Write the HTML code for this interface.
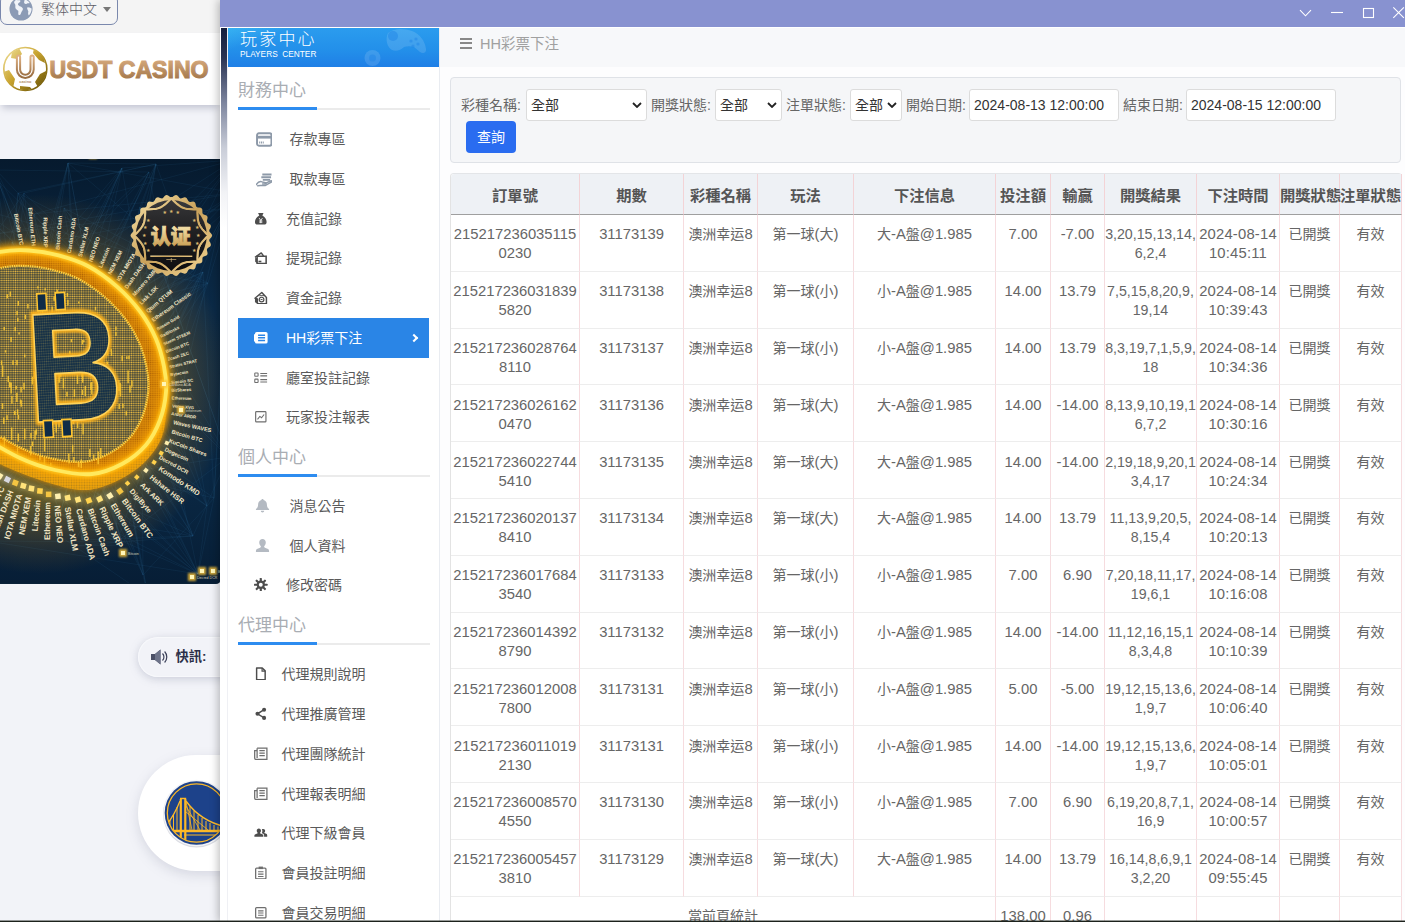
<!DOCTYPE html>
<html lang="zh-Hant">
<head>
<meta charset="utf-8">
<title>玩家中心 - HH彩票下注</title>
<style>
*{box-sizing:border-box;margin:0;padding:0}
html,body{width:1405px;height:922px;overflow:hidden}
body{position:relative;background:#f2f3f8;font-family:"Liberation Sans","Noto Sans CJK TC","Noto Sans CJK SC",sans-serif;color:#666}
.abs{position:absolute}
/* ---------- page behind ---------- */
#topstrip{left:0;top:0;width:220px;height:33px;background:#f4f4f4}
#lang{left:0;top:-6px;width:118px;height:31px;border:1px solid #7a88ad;border-radius:7px;background:#f5f5f5}
#lang span{position:absolute;left:40px;top:5px;font-size:14px;line-height:18px;color:#5c5c66;letter-spacing:0;font-weight:300}
#lang i{position:absolute;left:102px;top:12px;border:4px solid transparent;border-top:5px solid #777;border-bottom:0}
#logobar{left:0;top:33px;width:220px;height:72px;background:#fff;box-shadow:0 5px 7px -2px rgba(120,125,150,.4)}
#banner{left:0;top:159px;width:220px;height:424.500px;background:#0a2238;overflow:hidden;border-radius:0 0 4px 0}
#news{left:138px;top:637px;width:120px;height:40px;border-radius:20px;background:#f2f3f8;box-shadow:0 2px 8px rgba(130,135,160,.35),inset 0 0 0 1px #f7f8fb}
#news b{position:absolute;left:37.500px;top:11px;font-size:13.300px;line-height:18px;color:#2b2f48;font-weight:bold}
#team{left:138px;top:755px;width:200px;height:116px;border-radius:58px;background:#fff;box-shadow:0 4px 12px rgba(130,135,160,.25)}
/* ---------- modal ---------- */
#modal{left:220px;top:0;width:1185px;height:922px;background:#fff;box-shadow:-2px 0 8px rgba(0,0,0,.25)}
#tbar{left:0;top:0;width:1185px;height:27px;background:#8892d0}
#stripe{left:1px;top:28px;width:7px;height:894px;background:linear-gradient(#141e3c 0,#2a3454 30px,#7d859e 75px,#c9cdd8 120px,#f2f3f6 165px,#fff 200px)}
#side{left:8px;top:28px;width:212px;height:894px;background:#fff;border-right:1px solid #e9ecf1;box-shadow:-1px 0 0 #eff0f4}
#sidehead{left:0;top:0;width:211px;height:39px;background:linear-gradient(180deg,#2b9cee 0,#2390ea 55%,#1f7fe6 100%);overflow:hidden}
#main{left:220px;top:28px;width:965px;height:894px;background:#fdfdfe}

#mhead{left:0;top:0;width:965px;height:39px;background:#f7f8fa}
#mhead .ham{position:absolute;left:20px;top:9.5px;width:12px;height:12px}
#mhead .ham i{display:block;height:2px;background:#888;margin-bottom:2.6px}
#mhead .ttl{position:absolute;left:40px;top:6px;font-size:14.5px;line-height:20px;color:#a0a0a0}
#filter{left:10px;top:49px;width:951px;height:86px;border:1px solid #dfe2e7;border-radius:4px;background:#f5f6f8}
#filter label{top:17px;font-size:14px;line-height:20px;color:#666;white-space:nowrap}
.sel,.inp{top:11px;height:32px;background:#fff;border:1px solid #dcdcdc;border-radius:3px;font-size:14px;line-height:30px;color:#333;padding-left:4px;white-space:nowrap}
.sel svg{position:absolute;right:4px;top:12px;width:10px;height:6px;fill:none;stroke:#222;stroke-width:1.8}
.btn{left:15px;top:43px;width:50px;height:32px;border-radius:4px;background:#2a6cf0;color:#fff;font-size:14px;line-height:32px;text-align:center}
#tb{left:10px;top:145px;width:951px;border-collapse:separate;border-spacing:0;table-layout:fixed;font-size:14.8px;color:#666;border-left:1px solid #e3e3e3;border-top:1px solid #e3e5e8;border-radius:4px 4px 0 0}
#tb th{height:41px;background:#eef1f5;border-bottom:1px solid #9f9f9f;border-right:1px solid #f3d3d6;font-size:15.3px;font-weight:bold;color:#555;text-align:center;white-space:nowrap;padding:0}
#tb td{height:56.8px;vertical-align:top;padding:10.4px 0 0;line-height:19px;text-align:center;white-space:nowrap;border-right:1px solid #f6dcdf;border-bottom:1px solid #ededed;background:#fff}
#tb td.c{font-size:14px}
#tb td s{text-decoration:none;font-size:14.8px}
#tb td:nth-child(8){font-size:14.2px}
#tb td:nth-child(9){letter-spacing:.2px}
#tb th:first-child{border-radius:4px 0 0 0}

#sidehead .t1{position:absolute;left:12px;top:.5px;font-size:17px;line-height:22px;color:#fff;white-space:nowrap;letter-spacing:2.2px;font-weight:300}
#sidehead .t2{position:absolute;left:12px;top:20.5px;font-size:8.3px;line-height:10px;color:#fff;white-space:nowrap;letter-spacing:0}
.sec{position:absolute;left:10px;width:192px;height:34px;margin-top:2px;padding-top:.5px;font-size:17px;line-height:28px;color:#a9adb3;white-space:nowrap;border-bottom:2px solid #ebebeb}
.sec b{position:absolute;left:0;bottom:-2px;width:79px;height:3px;background:#2d8cf0}
.it{position:absolute;left:0;width:211px;height:40px;font-size:14px;line-height:40px;color:#5a5a5a;white-space:nowrap}
.it span{position:absolute;top:0}
.it .ic{position:absolute;left:26.200px;top:12.600px;width:13.600px;height:13.600px;color:#4d4d4d}
.it .ic.ln{color:#6e6e6e}
.it .ic.big{left:27.500px;top:12.800px;width:16.500px;height:15px;color:#8d99a8}
.it .ic.big2{left:26.500px;top:12px;width:15px;height:15px;color:#b4bac2}
.act{left:10px;top:290px;width:191px;height:40px;background:#2a85e6}
.it.on{color:#fff}
.it.on .ic{color:#fff}
.it.on em{position:absolute;left:124.500px;top:17px;width:6px;height:6px;border-top:2px solid #fff;border-right:2px solid #fff;transform:rotate(45deg)}
#bottomline{left:0;top:920px;width:1405px;height:2px;background:linear-gradient(rgba(30,36,30,.45) 0,rgba(30,36,30,.45) 50%,#1c221c 50%)}
</style>
</head>
<body>
<div id="topstrip" class="abs"></div>
<div id="lang" class="abs"><svg class="abs" style="left:8px;top:2px" width="24" height="24" viewBox="0 0 26 26"><circle cx="13" cy="13" r="12.500" fill="#8c9bb5"/><path d="M7 3.500c2-.5 3.500.5 5 0 1 1.500-.5 2.500-2 3.500-1 1.500.5 2 1.500 3 1.500.5 3 1 3.500 2.500.500 2-1.500 3-2 5-.5 1.500-1.500 2.500-2.500 2-1-1.500 0-3-.5-4.500-1-1-2.500-1.500-3-3-.5-2 .5-3.500-1-5C5 5.500 6 4.500 7 3.500zM17 2.500c2 .5 4 2 5.500 4-1 .5-2 0-3 .5-1 1-2.500.5-3-.5-.5-1.500.5-2.500.5-4zM20 11c1.500 0 3 .5 4.500 1.500 0 3-1 5.500-3 7.500-1-1-1-2.500-.5-4-.5-2-2-3-1-5z" fill="#f0f3f8"/></svg><span>繁体中文</span><i></i></div>
<div id="logobar" class="abs"><svg class="abs" style="left:0;top:0" width="220" height="72" viewBox="0 33 220 72" font-family="'Liberation Sans',sans-serif">
<defs><linearGradient id="lg1" x1="0" y1="0" x2="0" y2="1"><stop offset="0" stop-color="#ddb083"/><stop offset="1" stop-color="#9a6e42"/></linearGradient>
<linearGradient id="lg2" x1="0" y1="0" x2="1" y2="1"><stop offset="0" stop-color="#f2e3a0"/><stop offset=".45" stop-color="#c9a42f"/><stop offset="1" stop-color="#5e4a00"/></linearGradient>
<clipPath id="ballc"><circle cx="25.300" cy="69" r="21.200"/></clipPath></defs>
<circle cx="25.300" cy="69" r="21.500" fill="#fff" stroke="url(#lg2)" stroke-width="1.600"/>
<g clip-path="url(#ballc)" fill="url(#lg2)"><path d="M12 52l7-4 3 6-5 5-6-1zM34 48l9 6 2 9-6-3-6-7zM3 72l6-2 6 9-2 9-7-6zM40 74l6-3v10l-7 8-4-7zM20 86l10 1 4 5-14 1z"/></g>
<path d="M18.500 57v12.500a6.800 6.800 0 0 0 13.600 0V57" fill="none" stroke="url(#lg1)" stroke-width="5.200" stroke-linecap="round"/>
<path d="M18.500 57v12.500a6.800 6.800 0 0 0 13.600 0V57" fill="none" stroke="#fff" stroke-width="1.200" stroke-linecap="round"/>
<text x="25.300" y="83" font-size="3.800" text-anchor="middle" fill="#b08a60" font-weight="bold">casino</text>
<text x="49.500" y="78.300" font-size="24" font-weight="bold" fill="url(#lg1)" stroke="url(#lg1)" stroke-width="1.100" textLength="159" lengthAdjust="spacingAndGlyphs">USDT CASINO</text>
</svg></div>
<div id="banner" class="abs"><!--BANNER--><svg id="bsvg" width="220" height="424" viewBox="0 0 220 424" font-family="'Liberation Sans',sans-serif">
<defs>
<linearGradient id="bg" x1="0" y1="0" x2="0" y2="1"><stop offset="0" stop-color="#061a2e"/><stop offset=".35" stop-color="#0b2a47"/><stop offset=".75" stop-color="#0a2844"/><stop offset="1" stop-color="#071e36"/></linearGradient>
<radialGradient id="face" cx="25" cy="215" r="150" gradientUnits="userSpaceOnUse"><stop offset="0" stop-color="#9a6e14"/><stop offset=".55" stop-color="#a87812"/><stop offset=".78" stop-color="#c48a0c"/><stop offset=".93" stop-color="#e9a80c"/><stop offset="1" stop-color="#ffd234"/></radialGradient>
<radialGradient id="glow" cx="40" cy="225" r="190" gradientUnits="userSpaceOnUse"><stop offset=".6" stop-color="#ffb400" stop-opacity=".35"/><stop offset=".85" stop-color="#ff9a00" stop-opacity=".12"/><stop offset="1" stop-color="#ff9a00" stop-opacity="0"/></radialGradient>
<pattern id="dots" width="2.6" height="2.6" patternUnits="userSpaceOnUse"><rect width="2.6" height="2.6" fill="#0a2440" fill-opacity=".0"/><circle cx="1.3" cy="1.3" r=".95" fill="#ffd555"/></pattern>
<pattern id="bdots" width="2.2" height="2.2" patternUnits="userSpaceOnUse"><circle cx="1.1" cy="1.1" r=".7" fill="#8a4300" fill-opacity=".6"/></pattern>
<pattern id="ddots" width="2.6" height="2.6" patternUnits="userSpaceOnUse"><circle cx="1.3" cy="1.3" r=".9" fill="#0a2440" fill-opacity=".55"/></pattern>
<linearGradient id="gold" x1="0" y1="0" x2="1" y2="1"><stop offset="0" stop-color="#f7e2a8"/><stop offset=".5" stop-color="#c9a15a"/><stop offset="1" stop-color="#f3d796"/></linearGradient>
<linearGradient id="gold2" x1="0" y1="0" x2="0" y2="1"><stop offset="0" stop-color="#f8e6b0"/><stop offset="1" stop-color="#c79c50"/></linearGradient>
<linearGradient id="blk" x1="0" y1="0" x2="0" y2="1"><stop offset="0" stop-color="#3a3a3c"/><stop offset=".5" stop-color="#1e1e20"/><stop offset="1" stop-color="#0c0c0e"/></linearGradient>
<filter id="bl1" x="-20%" y="-20%" width="140%" height="140%"><feGaussianBlur stdDeviation="1.2"/></filter>
<filter id="bl3" x="-20%" y="-20%" width="140%" height="140%"><feGaussianBlur stdDeviation="3"/></filter>
<clipPath id="cface"><path id="facep" d="M-30.0 103.0C-25.0 101.3 -9.8 94.9 0.0 93.0C9.8 91.1 19.2 90.9 29.0 91.5C38.8 92.1 48.8 93.8 58.6 96.4C68.4 99.0 78.1 101.8 87.8 107.0C97.5 112.2 108.2 119.9 117.0 127.6C125.8 135.3 134.0 144.3 140.5 153.0C147.0 161.7 152.1 170.9 156.0 180.0C159.9 189.1 162.3 198.8 164.0 207.6C165.7 216.4 166.7 224.1 166.0 233.0C165.3 241.9 163.3 252.2 160.0 261.0C156.7 269.8 152.3 278.7 146.0 286.0C139.7 293.3 131.0 300.2 122.0 305.0C113.0 309.8 103.2 314.0 92.0 315.0C80.8 316.0 67.0 313.7 55.0 311.0C43.0 308.3 34.2 305.7 20.0 299.0C5.8 292.3 -21.7 275.7 -30.0 271.0Z"/></clipPath>
</defs>
<rect width="220" height="424" fill="url(#bg)"/>
<path d="M64 49L193 377M64 49L82 164M64 49L146 151M64 49L27 248M149 13L-4 11M149 13L207 347M149 13L7 272M149 13L-14 192M119 148L234 1M119 148L157 177M119 148L60 355M119 148L82 381M-5 213L198 415M-5 213L7 272M-5 213L98 118M-5 213L6 147M-10 179L119 148M-10 179L89 328M-10 179L-13 382M-10 179L193 377M-2 22L157 177M-2 22L46 140M-2 22L-5 213M-2 22L-13 382M90 360L80 288M90 360L203 113M90 360L198 415M90 360L6 147M12 83L193 377M12 83L187 302M12 83L123 386M12 83L-10 287M143 416L140 48M143 416L46 140M143 416L68 4M143 416L14 94M130 162L-10 287M130 162L170 112M130 162L208 124M130 162L41 203M234 1L179 244M234 1L235 34M234 1L6 147M234 1L34 55M203 113L123 386M203 113L-5 213M203 113L-4 303M203 113L82 164M18 34L198 415M18 34L170 112M18 34L1 187M18 34L156 5M60 355L1 187M60 355L193 377M60 355L234 1M60 355L-10 287M27 248L60 355M27 248L179 244M27 248L82 164M27 248L235 34M146 151L82 381M146 151L89 328M146 151L7 272M146 151L64 49M122 9L7 272M122 9L1 187M122 9L234 1M122 9L146 151M-5 75L229 49M-5 75L235 34M-5 75L7 272M-5 75L43 244M157 177L228 298M157 177L14 94M157 177L203 113M157 177L26 87M62 249L207 347M62 249L41 203M62 249L234 1M62 249L98 118M98 118L187 302M98 118L122 9M98 118L-5 213M98 118L62 249M187 302L207 347M187 302L157 177M187 302L82 164M187 302L1 187M43 244L62 249M43 244L122 9M43 244L119 148M43 244L149 13M117 383L60 355M117 383L-13 382M117 383L-5 75M117 383L228 298M170 112L170 112M170 112L20 205M170 112L-5 213M170 112L131 190M235 34L20 205M235 34L194 111M235 34L68 4M235 34L208 124M89 328L-5 333M89 328L198 415M89 328L46 140M89 328L-19 173M20 205L122 9M20 205L12 83M20 205L123 386M20 205L214 339M-10 287L6 147M-10 287L-19 173M-10 287L68 4M-10 287L122 9M179 244L140 48M179 244L62 249M179 244L-13 382M179 244L-20 50M208 124L119 148M208 124L114 264M208 124L117 383M208 124L64 49M161 253L62 249M161 253L43 244M161 253L157 177M161 253L82 164M131 190L146 151M131 190L12 83M131 190L-5 333M131 190L6 147M198 415L-13 382M198 415L7 272M198 415L60 355M198 415L12 83M103 286L161 253M103 286L170 112M103 286L-4 303M103 286L-2 22M-4 303L18 34M-4 303L68 4M-4 303L156 5M-4 303L-5 213M148 437L143 416M148 437L114 264M148 437L-5 333M148 437L68 4M194 111L-20 50M194 111L235 34M194 111L-4 303M194 111L156 5M80 288L-20 50M80 288L140 48M80 288L7 272M80 288L68 4M-14 192L161 253M-14 192L6 147M-14 192L198 415M-14 192L235 34M24 34L156 5M24 34L-5 75M24 34L-19 173M24 34L146 151M-5 333L26 87M-5 333L114 264M-5 333L24 34M-5 333L130 162M14 94L208 124M14 94L76 241M14 94L130 162M14 94L20 205M82 381L80 288M82 381L146 151M82 381L62 249M82 381L193 377M1 187L157 177M1 187L131 190M1 187L-5 75M1 187L207 347M123 386L-10 287M123 386L18 34M123 386L26 87M123 386L-4 11M193 377L98 118M193 377L-10 287M193 377L228 298M193 377L-20 50M52 171L41 203M52 171L82 381M52 171L-19 173M52 171L235 34M73 387L123 386M73 387L24 34M73 387L203 113M73 387L193 377M229 49L119 148M229 49L82 381M229 49L214 339M229 49L114 264M26 87L119 148M26 87L229 49M26 87L14 94M26 87L6 147M41 203L194 111M41 203L-20 50M41 203L143 416M41 203L27 248M133 101L179 244M133 101L60 355M133 101L234 1M133 101L198 415M-19 173L103 286M-19 173L-2 22M-19 173L117 383M-19 173L122 9M76 241L76 241M76 241L198 415M76 241L41 203M76 241L62 249M228 298L140 48M228 298L-20 50M228 298L34 55M228 298L-5 333M114 264L203 113M114 264L-4 303M114 264L12 83M114 264L117 383M156 5L76 241M156 5L130 162M156 5L103 286M156 5L119 148M214 339L203 113M214 339L198 415M214 339L234 1M214 339L-10 287M207 347L143 416M207 347L198 415M207 347L146 151M207 347L214 339M82 164L149 13M82 164L82 381M82 164L-19 173M82 164L103 286M7 272L122 9M7 272L-2 22M7 272L-13 382M7 272L208 124M-4 11L27 248M-4 11L98 118M-4 11L198 415M-4 11L90 360M34 55L117 383M34 55L235 34M34 55L-14 192M34 55L-13 382M68 4L89 328M68 4L194 111M68 4L156 5M68 4L68 4M-20 50L43 244M-20 50L103 286M-20 50L1 187M-20 50L119 148M6 147L131 190M6 147L-10 179M6 147L149 13M6 147L119 148M-13 382L68 4M-13 382L170 112M-13 382L-20 50M-13 382L82 164M140 48L161 253M140 48L156 5M140 48L60 355M140 48L228 298M46 140L34 55M46 140L46 140M46 140L26 87M46 140L68 4" stroke="#3f86b5" stroke-opacity=".2" stroke-width=".5" fill="none"/>
<rect width="220" height="424" fill="url(#glow)"/>
<g fill="#f3e6c4" font-weight="bold"><text x="21.6" y="86.2" font-size="5.6" text-anchor="end" transform="rotate(80.0 21.6 86.2)" dy="2.0">Bitcoin BTC</text><text x="33.9" y="86.9" font-size="5.6" text-anchor="end" transform="rotate(84.6 33.9 86.9)" dy="2.0">Ethereum ETH</text><text x="45.9" y="88.6" font-size="5.6" text-anchor="end" transform="rotate(89.2 45.9 88.6)" dy="2.0">Ripple XRP</text><text x="57.6" y="90.9" font-size="5.6" transform="rotate(-86.2 57.6 90.9)" dy="2.0">Bitcoin Cash</text><text x="68.9" y="94.2" font-size="5.6" transform="rotate(-81.6 68.9 94.2)" dy="2.0">Cardano ADA</text><text x="79.9" y="97.8" font-size="5.6" transform="rotate(-77.0 79.9 97.8)" dy="2.0">Stellar XLM</text><text x="90.3" y="102.6" font-size="5.6" transform="rotate(-72.4 90.3 102.6)" dy="2.0">NEO NEO</text><text x="100.0" y="108.5" font-size="5.6" transform="rotate(-67.8 100.0 108.5)" dy="2.0">Litecoin</text><text x="109.1" y="115.1" font-size="5.6" transform="rotate(-63.2 109.1 115.1)" dy="2.0">NEM XEM</text><text x="117.8" y="121.7" font-size="5.6" transform="rotate(-58.6 117.8 121.7)" dy="2.0">IOTA MIOTA</text><text x="125.7" y="129.0" font-size="5.6" transform="rotate(-54.0 125.7 129.0)" dy="2.0">Dash DASH</text><text x="133.3" y="136.5" font-size="5.6" transform="rotate(-49.4 133.3 136.5)" dy="2.0">Monero XMR</text><text x="140.1" y="144.5" font-size="5.6" transform="rotate(-44.8 140.1 144.5)" dy="2.0">Lisk LSK</text><text x="146.6" y="152.7" font-size="5.6" transform="rotate(-40.2 146.6 152.7)" dy="2.0">Qtum QTUM</text><text x="152.1" y="161.4" font-size="5.6" transform="rotate(-35.6 152.1 161.4)" dy="2.0">Ethereum Classic</text><text x="157.1" y="170.5" font-size="4.3" transform="rotate(-31.0 157.1 170.5)" dy="1.5">Bitcoin Gold</text><text x="160.4" y="177.7" font-size="4.3" transform="rotate(-27.4 160.4 177.7)" dy="1.5">RaiBlocks</text><text x="163.4" y="185.1" font-size="4.3" transform="rotate(-23.8 163.4 185.1)" dy="1.5">Steem STEEM</text><text x="165.8" y="192.7" font-size="4.3" transform="rotate(-20.2 165.8 192.7)" dy="1.5">Bitcoin BTC</text><text x="167.5" y="200.4" font-size="4.3" transform="rotate(-16.6 167.5 200.4)" dy="1.5">Zcash ZEC</text><text x="169.1" y="208.0" font-size="4.3" transform="rotate(-13.0 169.1 208.0)" dy="1.5">Stratis STRAT</text><text x="170.1" y="215.8" font-size="4.3" transform="rotate(-9.4 170.1 215.8)" dy="1.5">Bytecoin</text><text x="170.8" y="223.5" font-size="4.3" transform="rotate(-5.8 170.8 223.5)" dy="1.5">Siacoin SC</text><text x="171.2" y="231.3" font-size="4.3" transform="rotate(-2.2 171.2 231.3)" dy="1.5">BitShares</text><text x="171.6" y="239.0" font-size="4.3" transform="rotate(1.4 171.6 239.0)" dy="1.5">Ethereum</text><text x="172.2" y="246.9" font-size="4.3" transform="rotate(5.0 172.2 246.9)" dy="1.5">Verge XVG</text><text x="171.3" y="254.6" font-size="4.3" transform="rotate(8.6 171.3 254.6)" dy="1.5">Ardor ARDR</text><text x="173.4" y="263.1" font-size="5.6" transform="rotate(12.2 173.4 263.1)" dy="2.0">Waves WAVES</text><text x="171.7" y="272.4" font-size="5.6" transform="rotate(16.4 171.7 272.4)" dy="2.0">Bitcoin BTC</text><text x="169.1" y="281.5" font-size="5.6" transform="rotate(20.6 169.1 281.5)" dy="2.0">KuCoin Shares</text><text x="165.0" y="290.0" font-size="5.6" transform="rotate(24.8 165.0 290.0)" dy="2.0">Dogecoin</text><text x="159.5" y="297.8" font-size="5.6" transform="rotate(29.0 159.5 297.8)" dy="2.0">Decred DCR</text><text x="159.4" y="308.9" font-size="7.2" transform="rotate(33.2 159.4 308.9)" dy="2.5">Komodo KMD</text><text x="150.7" y="317.4" font-size="7.2" transform="rotate(38.4 150.7 317.4)" dy="2.5">Hshare HSR</text><text x="141.4" y="325.0" font-size="7.2" transform="rotate(43.6 141.4 325.0)" dy="2.5">Ark ARK</text><text x="131.1" y="330.9" font-size="7.2" transform="rotate(48.8 131.1 330.9)" dy="2.5">DigiByte</text><text x="123.9" y="340.4" font-size="8.2" transform="rotate(54.0 123.9 340.4)" dy="2.9">Bitcoin BTC</text><text x="112.9" y="344.9" font-size="8.2" transform="rotate(59.2 112.9 344.9)" dy="2.9">Ethereum</text><text x="101.8" y="348.3" font-size="8.2" transform="rotate(64.4 101.8 348.3)" dy="2.9">Ripple XRP</text><text x="90.3" y="349.7" font-size="8.2" transform="rotate(69.6 90.3 349.7)" dy="2.9">Bitcoin Cash</text><text x="78.9" y="349.7" font-size="8.2" transform="rotate(74.8 78.9 349.7)" dy="2.9">Cardano ADA</text><text x="67.7" y="347.9" font-size="8.2" transform="rotate(80.0 67.7 347.9)" dy="2.9">Stellar XLM</text><text x="57.3" y="346.5" font-size="8.2" transform="rotate(85.2 57.3 346.5)" dy="2.9">NEO NEO</text><text x="47.3" y="343.2" font-size="8.2" text-anchor="end" transform="rotate(270.4 47.3 343.2)" dy="2.9">Ethereum</text><text x="37.7" y="340.9" font-size="8.2" text-anchor="end" transform="rotate(275.6 37.7 340.9)" dy="2.9">Litecoin</text><text x="28.5" y="338.2" font-size="8.2" text-anchor="end" transform="rotate(280.8 28.5 338.2)" dy="2.9">NEM XEM</text><text x="19.6" y="335.1" font-size="8.2" text-anchor="end" transform="rotate(286.0 19.6 335.1)" dy="2.9">IOTA MIOTA</text><text x="10.9" y="331.7" font-size="8.2" text-anchor="end" transform="rotate(291.2 10.9 331.7)" dy="2.9">Dash DASH</text><text x="2.3" y="328.0" font-size="8.2" text-anchor="end" transform="rotate(296.4 2.3 328.0)" dy="2.9">Bitcoin BTC</text><text x="-6.3" y="324.2" font-size="8.2" text-anchor="end" transform="rotate(301.6 -6.3 324.2)" dy="2.9">Monero XMR</text><text x="-14.6" y="319.7" font-size="8.2" text-anchor="end" transform="rotate(306.8 -14.6 319.7)" dy="2.9">Lisk LSK</text><text x="-22.7" y="314.5" font-size="8.2" text-anchor="end" transform="rotate(312.0 -22.7 314.5)" dy="2.9">Qtum QTUM</text><text x="-31.1" y="309.3" font-size="8.2" text-anchor="end" transform="rotate(317.2 -31.1 309.3)" dy="2.9">Ethereum Classic</text><text x="-38.8" y="302.8" font-size="8.2" text-anchor="end" transform="rotate(322.4 -38.8 302.8)" dy="2.9">Bitcoin Gold</text><text x="-46.5" y="296.0" font-size="8.2" text-anchor="end" transform="rotate(327.6 -46.5 296.0)" dy="2.9">RaiBlocks</text><text x="-51.6" y="287.2" font-size="8.2" text-anchor="end" transform="rotate(332.8 -51.6 287.2)" dy="2.9">Steem STEEM</text><text x="-55.8" y="277.9" font-size="8.2" text-anchor="end" transform="rotate(338.0 -55.8 277.9)" dy="2.9">Zcash ZEC</text><text x="-59.2" y="268.4" font-size="8.2" text-anchor="end" transform="rotate(343.2 -59.2 268.4)" dy="2.9">Stratis STRAT</text><text x="-61.7" y="258.5" font-size="8.2" text-anchor="end" transform="rotate(348.4 -61.7 258.5)" dy="2.9">Siacoin SC</text><text x="-63.3" y="248.5" font-size="8.2" text-anchor="end" transform="rotate(353.6 -63.3 248.5)" dy="2.9">BitShares</text></g>
<g filter="url(#bl3)" opacity=".7"><rect x="164.9" y="282.0" width="4" height="4" fill="#fff0b0" transform="rotate(-68 166.9 284.0)"/><rect x="159.2" y="292.2" width="4" height="4" fill="#ffd24d" transform="rotate(-63 161.2 294.2)"/><rect x="152.1" y="301.3" width="4" height="4" fill="#ffd24d" transform="rotate(-58 154.1 303.3)"/><rect x="143.9" y="309.4" width="4" height="4" fill="#fff0b0" transform="rotate(-52 145.9 311.4)"/><rect x="134.8" y="316.2" width="4" height="4" fill="#ffd24d" transform="rotate(-47 136.8 318.2)"/><rect x="125.5" y="322.3" width="4" height="4" fill="#ffd24d" transform="rotate(-42 127.5 324.3)"/><rect x="117.2" y="329.4" width="5.5" height="5.5" fill="#f5c542" transform="rotate(-37 119.9 332.2)"/><rect x="107.2" y="334.0" width="5.5" height="5.5" fill="#fff0b0" transform="rotate(-32 110.0 336.8)"/><rect x="96.9" y="337.3" width="5.5" height="5.5" fill="#ffe27a" transform="rotate(-26 99.6 340.0)"/><rect x="86.2" y="338.8" width="5.5" height="5.5" fill="#ffd24d" transform="rotate(-21 88.9 341.6)"/><rect x="75.2" y="337.9" width="5.5" height="5.5" fill="#ffe27a" transform="rotate(-16 78.0 340.6)"/><rect x="64.9" y="336.1" width="5.5" height="5.5" fill="#ffe27a" transform="rotate(-11 67.6 338.8)"/><rect x="55.2" y="334.6" width="5.5" height="5.5" fill="#fff0b0" transform="rotate(-6 57.9 337.4)"/><rect x="45.9" y="332.6" width="5.5" height="5.5" fill="#f5c542" transform="rotate(-0 48.7 335.3)"/><rect x="37.2" y="329.3" width="5.5" height="5.5" fill="#ffd24d" transform="rotate(5 39.9 332.0)"/><rect x="28.7" y="326.8" width="5.5" height="5.5" fill="#ffe27a" transform="rotate(10 31.5 329.6)"/><rect x="20.6" y="324.1" width="5.5" height="5.5" fill="#ffe27a" transform="rotate(15 23.3 326.8)"/><rect x="12.6" y="321.1" width="5.5" height="5.5" fill="#f5c542" transform="rotate(20 15.3 323.8)"/><rect x="4.7" y="317.8" width="5.5" height="5.5" fill="#d8d8e0" transform="rotate(26 7.5 320.5)"/><rect x="-3.0" y="314.2" width="5.5" height="5.5" fill="#fff0b0" transform="rotate(31 -0.3 316.9)"/><rect x="-10.9" y="310.5" width="5.5" height="5.5" fill="#d8d8e0" transform="rotate(36 -8.2 313.3)"/><rect x="-18.4" y="306.0" width="5.5" height="5.5" fill="#ffd24d" transform="rotate(41 -15.7 308.7)"/><rect x="-25.7" y="300.9" width="5.5" height="5.5" fill="#fff0b0" transform="rotate(46 -23.0 303.6)"/><rect x="-33.5" y="295.7" width="5.5" height="5.5" fill="#ffe27a" transform="rotate(52 -30.8 298.4)"/><rect x="-40.9" y="289.6" width="5.5" height="5.5" fill="#f5c542" transform="rotate(57 -38.2 292.4)"/><rect x="-45.7" y="281.6" width="5.5" height="5.5" fill="#ffd24d" transform="rotate(62 -42.9 284.3)"/><rect x="-49.7" y="273.2" width="5.5" height="5.5" fill="#ffd24d" transform="rotate(67 -46.9 275.9)"/><rect x="-52.9" y="264.4" width="5.5" height="5.5" fill="#fff0b0" transform="rotate(72 -50.1 267.1)"/><rect x="-55.3" y="255.4" width="5.5" height="5.5" fill="#f5c542" transform="rotate(78 -52.6 258.1)"/><rect x="-56.9" y="246.2" width="5.5" height="5.5" fill="#ffe27a" transform="rotate(83 -54.2 248.9)"/></g><g><rect x="164.9" y="282.0" width="4" height="4" fill="#fff0b0" transform="rotate(-68 166.9 284.0)"/><rect x="159.2" y="292.2" width="4" height="4" fill="#ffd24d" transform="rotate(-63 161.2 294.2)"/><rect x="152.1" y="301.3" width="4" height="4" fill="#ffd24d" transform="rotate(-58 154.1 303.3)"/><rect x="143.9" y="309.4" width="4" height="4" fill="#fff0b0" transform="rotate(-52 145.9 311.4)"/><rect x="134.8" y="316.2" width="4" height="4" fill="#ffd24d" transform="rotate(-47 136.8 318.2)"/><rect x="125.5" y="322.3" width="4" height="4" fill="#ffd24d" transform="rotate(-42 127.5 324.3)"/><rect x="117.2" y="329.4" width="5.5" height="5.5" fill="#f5c542" transform="rotate(-37 119.9 332.2)"/><rect x="107.2" y="334.0" width="5.5" height="5.5" fill="#fff0b0" transform="rotate(-32 110.0 336.8)"/><rect x="96.9" y="337.3" width="5.5" height="5.5" fill="#ffe27a" transform="rotate(-26 99.6 340.0)"/><rect x="86.2" y="338.8" width="5.5" height="5.5" fill="#ffd24d" transform="rotate(-21 88.9 341.6)"/><rect x="75.2" y="337.9" width="5.5" height="5.5" fill="#ffe27a" transform="rotate(-16 78.0 340.6)"/><rect x="64.9" y="336.1" width="5.5" height="5.5" fill="#ffe27a" transform="rotate(-11 67.6 338.8)"/><rect x="55.2" y="334.6" width="5.5" height="5.5" fill="#fff0b0" transform="rotate(-6 57.9 337.4)"/><rect x="45.9" y="332.6" width="5.5" height="5.5" fill="#f5c542" transform="rotate(-0 48.7 335.3)"/><rect x="37.2" y="329.3" width="5.5" height="5.5" fill="#ffd24d" transform="rotate(5 39.9 332.0)"/><rect x="28.7" y="326.8" width="5.5" height="5.5" fill="#ffe27a" transform="rotate(10 31.5 329.6)"/><rect x="20.6" y="324.1" width="5.5" height="5.5" fill="#ffe27a" transform="rotate(15 23.3 326.8)"/><rect x="12.6" y="321.1" width="5.5" height="5.5" fill="#f5c542" transform="rotate(20 15.3 323.8)"/><rect x="4.7" y="317.8" width="5.5" height="5.5" fill="#d8d8e0" transform="rotate(26 7.5 320.5)"/><rect x="-3.0" y="314.2" width="5.5" height="5.5" fill="#fff0b0" transform="rotate(31 -0.3 316.9)"/><rect x="-10.9" y="310.5" width="5.5" height="5.5" fill="#d8d8e0" transform="rotate(36 -8.2 313.3)"/><rect x="-18.4" y="306.0" width="5.5" height="5.5" fill="#ffd24d" transform="rotate(41 -15.7 308.7)"/><rect x="-25.7" y="300.9" width="5.5" height="5.5" fill="#fff0b0" transform="rotate(46 -23.0 303.6)"/><rect x="-33.5" y="295.7" width="5.5" height="5.5" fill="#ffe27a" transform="rotate(52 -30.8 298.4)"/><rect x="-40.9" y="289.6" width="5.5" height="5.5" fill="#f5c542" transform="rotate(57 -38.2 292.4)"/><rect x="-45.7" y="281.6" width="5.5" height="5.5" fill="#ffd24d" transform="rotate(62 -42.9 284.3)"/><rect x="-49.7" y="273.2" width="5.5" height="5.5" fill="#ffd24d" transform="rotate(67 -46.9 275.9)"/><rect x="-52.9" y="264.4" width="5.5" height="5.5" fill="#fff0b0" transform="rotate(72 -50.1 267.1)"/><rect x="-55.3" y="255.4" width="5.5" height="5.5" fill="#f5c542" transform="rotate(78 -52.6 258.1)"/><rect x="-56.9" y="246.2" width="5.5" height="5.5" fill="#ffe27a" transform="rotate(83 -54.2 248.9)"/></g>
<path d="M-30.0 103.0C-25.0 101.3 -9.8 94.9 0.0 93.0C9.8 91.1 19.2 90.9 29.0 91.5C38.8 92.1 48.8 93.8 58.6 96.4C68.4 99.0 78.1 101.8 87.8 107.0C97.5 112.2 108.2 119.9 117.0 127.6C125.8 135.3 134.0 144.3 140.5 153.0C147.0 161.7 152.1 170.9 156.0 180.0C159.9 189.1 162.2 198.1 164.0 207.6C165.8 217.1 166.1 229.8 166.5 237.0C166.9 244.2 167.7 243.7 166.7 251.0C165.7 258.3 165.0 271.7 160.6 281.0C156.2 290.3 148.9 299.7 140.5 307.0C132.1 314.3 120.1 321.0 110.0 325.0C99.9 329.0 91.7 331.7 80.0 331.0C68.3 330.3 53.3 325.3 40.0 321.0C26.7 316.7 11.7 310.8 0.0 305.0C-11.7 299.2 -25.0 289.2 -30.0 286.0Z" fill="#ff9d00" filter="url(#bl3)" opacity=".75"/>
<path d="M-30.0 103.0C-25.0 101.3 -9.8 94.9 0.0 93.0C9.8 91.1 19.2 90.9 29.0 91.5C38.8 92.1 48.8 93.8 58.6 96.4C68.4 99.0 78.1 101.8 87.8 107.0C97.5 112.2 108.2 119.9 117.0 127.6C125.8 135.3 134.0 144.3 140.5 153.0C147.0 161.7 152.1 170.9 156.0 180.0C159.9 189.1 162.2 198.1 164.0 207.6C165.8 217.1 166.1 229.8 166.5 237.0C166.9 244.2 167.7 243.7 166.7 251.0C165.7 258.3 165.0 271.7 160.6 281.0C156.2 290.3 148.9 299.7 140.5 307.0C132.1 314.3 120.1 321.0 110.0 325.0C99.9 329.0 91.7 331.7 80.0 331.0C68.3 330.3 53.3 325.3 40.0 321.0C26.7 316.7 11.7 310.8 0.0 305.0C-11.7 299.2 -25.0 289.2 -30.0 286.0Z" fill="#f2a50a"/>
<path d="M-30.0 103.0C-25.0 101.3 -9.8 94.9 0.0 93.0C9.8 91.1 19.2 90.9 29.0 91.5C38.8 92.1 48.8 93.8 58.6 96.4C68.4 99.0 78.1 101.8 87.8 107.0C97.5 112.2 108.2 119.9 117.0 127.6C125.8 135.3 134.0 144.3 140.5 153.0C147.0 161.7 152.1 170.9 156.0 180.0C159.9 189.1 162.2 198.1 164.0 207.6C165.8 217.1 166.1 229.8 166.5 237.0C166.9 244.2 167.7 243.7 166.7 251.0C165.7 258.3 165.0 271.7 160.6 281.0C156.2 290.3 148.9 299.7 140.5 307.0C132.1 314.3 120.1 321.0 110.0 325.0C99.9 329.0 91.7 331.7 80.0 331.0C68.3 330.3 53.3 325.3 40.0 321.0C26.7 316.7 11.7 310.8 0.0 305.0C-11.7 299.2 -25.0 289.2 -30.0 286.0Z" fill="url(#ddots)" opacity=".5"/>
<path d="M-30.0 103.0C-25.0 101.3 -9.8 94.9 0.0 93.0C9.8 91.1 19.2 90.9 29.0 91.5C38.8 92.1 48.8 93.8 58.6 96.4C68.4 99.0 78.1 101.8 87.8 107.0C97.5 112.2 108.2 119.9 117.0 127.6C125.8 135.3 134.0 144.3 140.5 153.0C147.0 161.7 152.1 170.9 156.0 180.0C159.9 189.1 162.3 198.8 164.0 207.6C165.7 216.4 166.7 224.1 166.0 233.0C165.3 241.9 163.3 252.2 160.0 261.0C156.7 269.8 152.3 278.7 146.0 286.0C139.7 293.3 131.0 300.2 122.0 305.0C113.0 309.8 103.2 314.0 92.0 315.0C80.8 316.0 67.0 313.7 55.0 311.0C43.0 308.3 34.2 305.7 20.0 299.0C5.8 292.3 -21.7 275.7 -30.0 271.0Z" fill="#dc8c0a"/>
<path d="M-30.0 103.0C-25.0 101.3 -9.8 94.9 0.0 93.0C9.8 91.1 19.2 90.9 29.0 91.5C38.8 92.1 48.8 93.8 58.6 96.4C68.4 99.0 78.1 101.8 87.8 107.0C97.5 112.2 108.2 119.9 117.0 127.6C125.8 135.3 134.0 144.3 140.5 153.0C147.0 161.7 152.1 170.9 156.0 180.0C159.9 189.1 162.3 198.8 164.0 207.6C165.7 216.4 166.7 224.1 166.0 233.0C165.3 241.9 163.3 252.2 160.0 261.0C156.7 269.8 152.3 278.7 146.0 286.0C139.7 293.3 131.0 300.2 122.0 305.0C113.0 309.8 103.2 314.0 92.0 315.0C80.8 316.0 67.0 313.7 55.0 311.0C43.0 308.3 34.2 305.7 20.0 299.0C5.8 292.3 -21.7 275.7 -30.0 271.0Z" fill="url(#bdots)"/>
<g clip-path="url(#cface)">
<path d="M-30.0 103.0C-25.0 101.3 -9.8 94.9 0.0 93.0C9.8 91.1 19.2 90.9 29.0 91.5C38.8 92.1 48.8 93.8 58.6 96.4C68.4 99.0 78.1 101.8 87.8 107.0C97.5 112.2 108.2 119.9 117.0 127.6C125.8 135.3 134.0 144.3 140.5 153.0C147.0 161.7 152.1 170.9 156.0 180.0C159.9 189.1 162.3 198.8 164.0 207.6C165.7 216.4 166.7 224.1 166.0 233.0C165.3 241.9 163.3 252.2 160.0 261.0C156.7 269.8 152.3 278.7 146.0 286.0C139.7 293.3 131.0 300.2 122.0 305.0C113.0 309.8 103.2 314.0 92.0 315.0C80.8 316.0 67.0 313.7 55.0 311.0C43.0 308.3 34.2 305.7 20.0 299.0C5.8 292.3 -21.7 275.7 -30.0 271.0Z" transform="translate(24 217) scale(.875) translate(-24 -217)" fill="#12304a"/>
<path d="M-30.0 103.0C-25.0 101.3 -9.8 94.9 0.0 93.0C9.8 91.1 19.2 90.9 29.0 91.5C38.8 92.1 48.8 93.8 58.6 96.4C68.4 99.0 78.1 101.8 87.8 107.0C97.5 112.2 108.2 119.9 117.0 127.6C125.8 135.3 134.0 144.3 140.5 153.0C147.0 161.7 152.1 170.9 156.0 180.0C159.9 189.1 162.3 198.8 164.0 207.6C165.7 216.4 166.7 224.1 166.0 233.0C165.3 241.9 163.3 252.2 160.0 261.0C156.7 269.8 152.3 278.7 146.0 286.0C139.7 293.3 131.0 300.2 122.0 305.0C113.0 309.8 103.2 314.0 92.0 315.0C80.8 316.0 67.0 313.7 55.0 311.0C43.0 308.3 34.2 305.7 20.0 299.0C5.8 292.3 -21.7 275.7 -30.0 271.0Z" transform="translate(24 217) scale(.875) translate(-24 -217)" fill="url(#dots)" opacity=".9"/>
<path d="M-30.0 103.0C-25.0 101.3 -9.8 94.9 0.0 93.0C9.8 91.1 19.2 90.9 29.0 91.5C38.8 92.1 48.8 93.8 58.6 96.4C68.4 99.0 78.1 101.8 87.8 107.0C97.5 112.2 108.2 119.9 117.0 127.6C125.8 135.3 134.0 144.3 140.5 153.0C147.0 161.7 152.1 170.9 156.0 180.0C159.9 189.1 162.3 198.8 164.0 207.6C165.7 216.4 166.7 224.1 166.0 233.0C165.3 241.9 163.3 252.2 160.0 261.0C156.7 269.8 152.3 278.7 146.0 286.0C139.7 293.3 131.0 300.2 122.0 305.0C113.0 309.8 103.2 314.0 92.0 315.0C80.8 316.0 67.0 313.7 55.0 311.0C43.0 308.3 34.2 305.7 20.0 299.0C5.8 292.3 -21.7 275.7 -30.0 271.0Z" transform="translate(24 217) scale(.875) translate(-24 -217)" fill="none" stroke="#ffd84a" stroke-width="2.6" stroke-dasharray="1.6 1"/>
<path d="M-30.0 103.0C-25.0 101.3 -9.8 94.9 0.0 93.0C9.8 91.1 19.2 90.9 29.0 91.5C38.8 92.1 48.8 93.8 58.6 96.4C68.4 99.0 78.1 101.8 87.8 107.0C97.5 112.2 108.2 119.9 117.0 127.6C125.8 135.3 134.0 144.3 140.5 153.0C147.0 161.7 152.1 170.9 156.0 180.0C159.9 189.1 162.3 198.8 164.0 207.6C165.7 216.4 166.7 224.1 166.0 233.0C165.3 241.9 163.3 252.2 160.0 261.0C156.7 269.8 152.3 278.7 146.0 286.0C139.7 293.3 131.0 300.2 122.0 305.0C113.0 309.8 103.2 314.0 92.0 315.0C80.8 316.0 67.0 313.7 55.0 311.0C43.0 308.3 34.2 305.7 20.0 299.0C5.8 292.3 -21.7 275.7 -30.0 271.0Z" transform="translate(24 217) scale(.875) translate(-24 -217)" fill="#ff9c00" opacity=".2"/>
<path d="M8.4 320.7v12.7M82.1 211.1v6.6M90.9 223.4v7.7M9.7 222.8v5.6M81.0 256.8v3.4M82.4 230.8v5.3M18.3 141.9v4.9M71.4 180.0v3.3M63.4 219.3v10.2M2.6 206.6v11.4M90.7 173.3v4.9M34.8 188.5v4.1M54.1 137.4v4.3M94.2 171.5v4.8M20.6 240.5v4.3M63.3 158.9v4.5M11.2 223.4v11.0M17.1 152.1v4.1M1.6 201.4v4.9M17.6 250.3v5.7M11.1 178.1v5.0M100.0 212.3v6.8M27.9 144.9v4.6M58.0 241.0v5.5M15.2 167.9v4.3M47.0 224.9v5.7M59.3 195.3v5.9M32.4 217.8v7.6M67.4 133.9v3.8M11.7 268.5v12.5M40.0 296.9v4.4M89.9 290.0v8.1M93.0 168.3v2.9M83.9 181.2v2.1M100.7 224.6v7.5M3.8 258.5v6.4M120.2 223.9v11.4M100.8 288.9v10.1M69.8 191.8v3.5M53.9 232.5v11.3M18.3 274.5v8.1M44.6 279.8v12.6M97.4 163.1v4.5M115.9 172.8v4.2M13.0 201.2v4.9M126.3 252.2v4.3M77.5 215.4v9.6M46.4 261.7v12.1M115.9 167.5v3.8M51.1 256.7v3.9M-1.5 248.3v5.4M13.3 298.4v11.9M17.8 158.8v3.7M2.5 244.2v5.8M59.0 215.8v8.0M31.0 273.9v5.5M122.2 196.7v5.5M39.0 225.5v10.1M82.4 181.1v4.3M91.8 223.1v12.3M67.9 140.7v5.9M18.4 256.0v4.5M111.5 192.5v4.6M25.4 155.7v4.2M119.2 244.8v5.3M101.1 184.3v3.2M59.1 259.1v9.4M5.5 191.2v2.3M8.3 216.9v6.0M20.1 321.0v10.0M11.9 236.8v8.0M13.6 304.6v12.3M21.2 241.3v6.4M51.8 307.6v10.4M82.7 212.5v11.2M24.7 269.7v10.6M30.7 286.7v9.7M60.8 210.9v6.9M44.9 319.0v4.4M45.4 230.8v6.9M107.0 166.9v4.9M131.9 221.5v6.3M63.0 311.9v10.5M112.3 239.2v6.8M21.1 227.7v5.8M100.6 291.9v5.1M51.9 163.9v2.2M63.4 201.7v3.5M34.4 212.5v7.1M57.1 142.0v2.2M46.8 228.4v12.2M13.5 309.4v12.0M107.4 202.4v3.0M4.2 168.0v3.1M120.5 225.1v12.2M74.4 230.3v7.8M129.0 196.8v3.5M17.5 288.6v7.9M63.4 204.3v11.0M10.3 132.5v5.1M24.7 195.5v2.8M19.1 173.3v2.3M103.7 238.7v6.3M128.1 211.4v12.9M14.8 251.9v4.0M73.1 156.2v2.5M52.6 177.4v4.3M36.4 270.2v5.5M81.3 300.2v8.8M102.0 219.6v5.3M52.2 147.6v6.0M83.1 264.3v11.2M78.8 142.4v2.2M7.0 256.2v4.9M106.8 210.1v12.3M37.9 127.2v2.4M32.5 282.5v4.4M35.0 271.4v9.0M85.3 227.1v9.8M44.1 274.3v5.0M42.5 151.9v2.3M77.6 260.4v8.5M68.8 294.4v7.1M4.4 277.3v12.5M95.5 147.8v3.5M50.8 303.7v5.0M130.0 226.5v7.2M50.2 165.4v5.5M105.3 229.9v9.4M47.7 207.0v9.2M56.2 265.2v8.2M52.7 208.1v7.9M57.2 130.4v2.8M98.2 292.4v12.8M83.7 195.1v5.6M73.9 297.9v5.2M42.1 185.4v2.9M19.9 308.1v12.0M103.6 242.2v10.6M122.9 244.7v4.2M109.8 234.5v7.9M27.5 310.0v10.8M71.6 270.4v3.9M109.1 243.2v3.8M7.2 135.3v4.0M96.9 246.7v6.8M59.5 211.8v11.6M118.9 220.9v11.1M58.5 315.9v7.9M126.8 197.2v2.7M45.2 129.3v2.3M78.6 302.6v5.7M35.9 188.3v4.0M65.2 201.0v3.1M67.0 232.8v4.6M107.6 190.9v5.6M69.1 300.3v4.2M46.2 201.2v6.0M35.9 173.8v6.0M25.2 156.8v2.7M17.0 201.0v5.3M15.8 302.9v12.8M16.1 226.9v3.3M72.7 286.3v7.3M56.0 258.2v9.5M24.0 223.7v6.5M73.3 260.0v5.2M44.5 298.7v7.7M93.7 295.5v5.4M39.6 248.0v9.4M90.1 159.0v3.6M16.9 233.7v9.4M111.3 190.1v3.0M38.3 211.0v8.3" stroke="#ffcc33" stroke-width="1.5" opacity=".85"/>
<g transform="translate(74 205) rotate(-3) scale(.84 1)"><text x="0" y="56" font-size="156" font-weight="bold" text-anchor="middle" fill="#ffb41e" stroke="#ffb41e" stroke-width="7" stroke-linejoin="round" filter="url(#bl1)" opacity=".9">B</text><text x="0" y="56" font-size="156" font-weight="bold" text-anchor="middle" fill="#0f2c47" stroke="#ffd35a" stroke-width="1.6" stroke-linejoin="round">B</text><text x="0" y="56" font-size="156" font-weight="bold" text-anchor="middle" fill="url(#dots)" opacity=".28">B</text>
<g fill="#0f2c47" stroke="#ffc531" stroke-width="1.8"><rect x="-40" y="-72" width="11" height="17"/><rect x="-18" y="-72" width="11" height="17"/><rect x="-40" y="55" width="11" height="17"/><rect x="-18" y="55" width="11" height="17"/></g></g>
</g>
<path d="M-30.0 103.0C-25.0 101.3 -9.8 94.9 0.0 93.0C9.8 91.1 19.2 90.9 29.0 91.5C38.8 92.1 48.8 93.8 58.6 96.4C68.4 99.0 78.1 101.8 87.8 107.0C97.5 112.2 108.2 119.9 117.0 127.6C125.8 135.3 134.0 144.3 140.5 153.0C147.0 161.7 152.1 170.9 156.0 180.0C159.9 189.1 162.3 198.8 164.0 207.6C165.7 216.4 166.7 224.1 166.0 233.0C165.3 241.9 163.3 252.2 160.0 261.0C156.7 269.8 152.3 278.7 146.0 286.0C139.7 293.3 131.0 300.2 122.0 305.0C113.0 309.8 103.2 314.0 92.0 315.0C80.8 316.0 67.0 313.7 55.0 311.0C43.0 308.3 34.2 305.7 20.0 299.0C5.8 292.3 -21.7 275.7 -30.0 271.0Z" fill="none" stroke="#ffa800" stroke-width="13" filter="url(#bl3)" opacity=".75"/>
<path d="M-30.0 103.0C-25.0 101.3 -9.8 94.9 0.0 93.0C9.8 91.1 19.2 90.9 29.0 91.5C38.8 92.1 48.8 93.8 58.6 96.4C68.4 99.0 78.1 101.8 87.8 107.0C97.5 112.2 108.2 119.9 117.0 127.6C125.8 135.3 134.0 144.3 140.5 153.0C147.0 161.7 152.1 170.9 156.0 180.0C159.9 189.1 162.3 198.8 164.0 207.6C165.7 216.4 166.7 224.1 166.0 233.0C165.3 241.9 163.3 252.2 160.0 261.0C156.7 269.8 152.3 278.7 146.0 286.0C139.7 293.3 131.0 300.2 122.0 305.0C113.0 309.8 103.2 314.0 92.0 315.0C80.8 316.0 67.0 313.7 55.0 311.0C43.0 308.3 34.2 305.7 20.0 299.0C5.8 292.3 -21.7 275.7 -30.0 271.0Z" fill="none" stroke="#ffc21a" stroke-width="7" filter="url(#bl1)" opacity=".9"/>
<path d="M-30.0 103.0C-25.0 101.3 -9.8 94.9 0.0 93.0C9.8 91.1 19.2 90.9 29.0 91.5C38.8 92.1 48.8 93.8 58.6 96.4C68.4 99.0 78.1 101.8 87.8 107.0C97.5 112.2 108.2 119.9 117.0 127.6C125.8 135.3 134.0 144.3 140.5 153.0C147.0 161.7 152.1 170.9 156.0 180.0C159.9 189.1 162.3 198.8 164.0 207.6C165.7 216.4 166.7 224.1 166.0 233.0C165.3 241.9 163.3 252.2 160.0 261.0C156.7 269.8 152.3 278.7 146.0 286.0C139.7 293.3 131.0 300.2 122.0 305.0C113.0 309.8 103.2 314.0 92.0 315.0C80.8 316.0 67.0 313.7 55.0 311.0C43.0 308.3 34.2 305.7 20.0 299.0C5.8 292.3 -21.7 275.7 -30.0 271.0Z" fill="none" stroke="#ffe95e" stroke-width="3.8"/>
<rect x="20" y="-16" width="8" height="8" fill="#ffc83a" filter="url(#bl1)" opacity=".8"/><rect x="22" y="-14" width="4" height="4" fill="#fff6b8"/>
<text x="29" y="-10.5" font-size="3.6" fill="#d9d2bd">Dogecoin</text>
<rect x="89" y="-8" width="8" height="8" fill="#ffc83a" filter="url(#bl1)" opacity=".8"/><rect x="91" y="-6" width="4" height="4" fill="#fff6b8"/>
<text x="98" y="-2.5" font-size="3.6" fill="#d9d2bd">Ripple</text>
<rect x="161" y="-33" width="8" height="8" fill="#ffc83a" filter="url(#bl1)" opacity=".8"/><rect x="163" y="-31" width="4" height="4" fill="#fff6b8"/>
<text x="170" y="-27.5" font-size="3.6" fill="#d9d2bd">Bytecoin</text>
<rect x="160" y="221" width="8" height="8" fill="#ffc83a" filter="url(#bl1)" opacity=".8"/><rect x="162" y="223" width="4" height="4" fill="#fff6b8"/>
<text x="169" y="226.5" font-size="3.6" fill="#d9d2bd">Cardano ADA</text>
<rect x="177" y="247" width="8" height="8" fill="#ffc83a" filter="url(#bl1)" opacity=".8"/><rect x="179" y="249" width="4" height="4" fill="#fff6b8"/>
<text x="186" y="252.5" font-size="3.6" fill="#d9d2bd">ethereum</text>
<rect x="188" y="414" width="8" height="8" fill="#ffc83a" filter="url(#bl1)" opacity=".8"/><rect x="190" y="416" width="4" height="4" fill="#fff6b8"/>
<text x="197" y="419.5" font-size="3.6" fill="#d9d2bd">Decred DCR</text>
<rect x="198" y="408" width="8" height="8" fill="#ffc83a" filter="url(#bl1)" opacity=".8"/><rect x="200" y="410" width="4" height="4" fill="#fff6b8"/>
<rect x="209" y="408" width="8" height="8" fill="#ffc83a" filter="url(#bl1)" opacity=".8"/><rect x="211" y="410" width="4" height="4" fill="#fff6b8"/>
<text x="218" y="413.5" font-size="3.6" fill="#d9d2bd">Byte</text>
<rect x="119" y="390" width="8" height="8" fill="#ffc83a" filter="url(#bl1)" opacity=".8"/><rect x="121" y="392" width="4" height="4" fill="#fff6b8"/>
<text x="128" y="395.5" font-size="3.6" fill="#d9d2bd">Bitcoin</text>
<path d="M212.1 76.5L211.7 77.7L210.7 78.9L209.7 80.0L209.2 81.1L209.4 82.3L210.2 83.6L210.8 85.0L210.9 86.3L210.2 87.4L209.0 88.3L207.8 89.1L207.0 90.0L206.9 91.3L207.3 92.7L207.6 94.2L207.4 95.5L206.5 96.4L205.1 96.9L203.7 97.4L202.7 98.2L202.4 99.4L202.4 100.9L202.3 102.4L201.8 103.6L200.7 104.2L199.2 104.4L197.7 104.6L196.6 105.1L196.0 106.1L195.7 107.6L195.3 109.1L194.5 110.1L193.2 110.4L191.7 110.3L190.3 110.1L189.1 110.3L188.2 111.2L187.5 112.5L186.8 113.8L185.8 114.6L184.5 114.7L183.1 114.2L181.7 113.7L180.4 113.6L179.4 114.2L178.4 115.4L177.4 116.5L176.2 117.0L175.0 116.8L173.7 115.9L172.5 115.1L171.3 114.7L170.1 115.1L168.9 115.9L167.6 116.8L166.4 117.0L165.2 116.5L164.2 115.4L163.2 114.2L162.2 113.6L160.9 113.7L159.5 114.2L158.1 114.7L156.8 114.6L155.8 113.8L155.1 112.5L154.4 111.2L153.5 110.3L152.3 110.1L150.9 110.3L149.4 110.4L148.1 110.1L147.3 109.1L146.9 107.6L146.6 106.1L146.0 105.1L144.9 104.6L143.4 104.4L141.9 104.2L140.8 103.6L140.3 102.4L140.2 100.9L140.2 99.4L139.9 98.2L138.9 97.4L137.5 96.9L136.1 96.4L135.2 95.5L135.0 94.2L135.3 92.7L135.7 91.3L135.6 90.0L134.8 89.1L133.6 88.3L132.4 87.4L131.7 86.3L131.8 85.0L132.4 83.6L133.2 82.3L133.4 81.1L132.9 80.0L131.9 78.9L130.9 77.7L130.5 76.5L130.9 75.3L131.9 74.1L132.9 73.0L133.4 71.9L133.2 70.7L132.4 69.4L131.8 68.0L131.7 66.7L132.4 65.6L133.6 64.7L134.8 63.9L135.6 63.0L135.7 61.7L135.3 60.3L135.0 58.8L135.2 57.5L136.1 56.6L137.5 56.1L138.9 55.6L139.9 54.8L140.2 53.6L140.2 52.1L140.3 50.6L140.8 49.4L141.9 48.8L143.4 48.6L144.9 48.4L146.0 47.9L146.6 46.9L146.9 45.4L147.3 43.9L148.1 42.9L149.4 42.6L150.9 42.7L152.3 42.9L153.5 42.7L154.4 41.8L155.1 40.5L155.8 39.2L156.8 38.4L158.1 38.3L159.5 38.8L160.9 39.3L162.2 39.4L163.2 38.8L164.2 37.6L165.2 36.5L166.4 36.0L167.6 36.2L168.9 37.1L170.1 37.9L171.3 38.3L172.5 37.9L173.7 37.1L175.0 36.2L176.2 36.0L177.4 36.5L178.4 37.6L179.4 38.8L180.4 39.4L181.7 39.3L183.1 38.8L184.5 38.3L185.8 38.4L186.8 39.2L187.5 40.5L188.2 41.8L189.1 42.7L190.3 42.9L191.7 42.7L193.2 42.6L194.5 42.9L195.3 43.9L195.7 45.4L196.0 46.9L196.6 47.9L197.7 48.4L199.2 48.6L200.7 48.8L201.8 49.4L202.3 50.6L202.4 52.1L202.4 53.6L202.7 54.8L203.7 55.6L205.1 56.1L206.5 56.6L207.4 57.5L207.6 58.8L207.3 60.3L206.9 61.7L207.0 63.0L207.8 63.9L209.0 64.7L210.2 65.6L210.9 66.7L210.8 68.0L210.2 69.4L209.4 70.7L209.2 71.9L209.7 73.0L210.7 74.1L211.7 75.3L212.1 76.5Z" fill="url(#gold)"/>
<circle cx="171.3" cy="76.5" r="35.5" fill="url(#blk)"/>
<path d="M208.3 76.5L205.9 78.8L204.0 80.8L202.4 82.7L201.0 84.5L199.9 86.2L199.0 88.0L198.4 89.9L197.9 91.9L197.7 94.1L197.5 96.6L197.3 99.3L197.5 102.7L194.1 102.5L191.4 102.7L188.9 102.9L186.7 103.1L184.7 103.6L182.8 104.2L181.0 105.1L179.3 106.2L177.5 107.6L175.6 109.2L173.6 111.1L171.3 113.5L169.0 111.1L167.0 109.2L165.1 107.6L163.3 106.2L161.6 105.1L159.8 104.2L157.9 103.6L155.9 103.1L153.7 102.9L151.2 102.7L148.5 102.5L145.1 102.7L145.3 99.3L145.1 96.6L144.9 94.1L144.7 91.9L144.2 89.9L143.6 88.0L142.7 86.2L141.6 84.5L140.2 82.7L138.6 80.8L136.7 78.8L134.3 76.5L136.7 74.2L138.6 72.2L140.2 70.3L141.6 68.5L142.7 66.8L143.6 65.0L144.2 63.1L144.7 61.1L144.9 58.9L145.1 56.4L145.3 53.7L145.1 50.3L148.5 50.5L151.2 50.3L153.7 50.1L155.9 49.9L157.9 49.4L159.8 48.8L161.6 47.9L163.3 46.8L165.1 45.4L167.0 43.8L169.0 41.9L171.3 39.5L173.6 41.9L175.6 43.8L177.5 45.4L179.3 46.8L181.0 47.9L182.8 48.8L184.7 49.4L186.7 49.9L188.9 50.1L191.4 50.3L194.1 50.5L197.5 50.3L197.3 53.7L197.5 56.4L197.7 58.9L197.9 61.1L198.4 63.1L199.0 65.0L199.9 66.8L201.0 68.5L202.4 70.3L204.0 72.2L205.9 74.2L208.3 76.5Z" fill="#1d1d1f" stroke="url(#gold)" stroke-width="2"/>
<path d="M208.3 76.5L205.9 78.8L204.0 80.8L202.4 82.7L201.0 84.5L199.9 86.2L199.0 88.0L198.4 89.9L197.9 91.9L197.7 94.1L197.5 96.6L197.3 99.3L197.5 102.7L194.1 102.5L191.4 102.7L188.9 102.9L186.7 103.1L184.7 103.6L182.8 104.2L181.0 105.1L179.3 106.2L177.5 107.6L175.6 109.2L173.6 111.1L171.3 113.5L169.0 111.1L167.0 109.2L165.1 107.6L163.3 106.2L161.6 105.1L159.8 104.2L157.9 103.6L155.9 103.1L153.7 102.9L151.2 102.7L148.5 102.5L145.1 102.7L145.3 99.3L145.1 96.6L144.9 94.1L144.7 91.9L144.2 89.9L143.6 88.0L142.7 86.2L141.6 84.5L140.2 82.7L138.6 80.8L136.7 78.8L134.3 76.5L136.7 74.2L138.6 72.2L140.2 70.3L141.6 68.5L142.7 66.8L143.6 65.0L144.2 63.1L144.7 61.1L144.9 58.9L145.1 56.4L145.3 53.7L145.1 50.3L148.5 50.5L151.2 50.3L153.7 50.1L155.9 49.9L157.9 49.4L159.8 48.8L161.6 47.9L163.3 46.8L165.1 45.4L167.0 43.8L169.0 41.9L171.3 39.5L173.6 41.9L175.6 43.8L177.5 45.4L179.3 46.8L181.0 47.9L182.8 48.8L184.7 49.4L186.7 49.9L188.9 50.1L191.4 50.3L194.1 50.5L197.5 50.3L197.3 53.7L197.5 56.4L197.7 58.9L197.9 61.1L198.4 63.1L199.0 65.0L199.9 66.8L201.0 68.5L202.4 70.3L204.0 72.2L205.9 74.2L208.3 76.5Z" fill="url(#blk)" opacity=".9"/>
<path d="M208.3 76.5L205.9 78.8L204.0 80.8L202.4 82.7L201.0 84.5L199.9 86.2L199.0 88.0L198.4 89.9L197.9 91.9L197.7 94.1L197.5 96.6L197.3 99.3L197.5 102.7L194.1 102.5L191.4 102.7L188.9 102.9L186.7 103.1L184.7 103.6L182.8 104.2L181.0 105.1L179.3 106.2L177.5 107.6L175.6 109.2L173.6 111.1L171.3 113.5L169.0 111.1L167.0 109.2L165.1 107.6L163.3 106.2L161.6 105.1L159.8 104.2L157.9 103.6L155.9 103.1L153.7 102.9L151.2 102.7L148.5 102.5L145.1 102.7L145.3 99.3L145.1 96.6L144.9 94.1L144.7 91.9L144.2 89.9L143.6 88.0L142.7 86.2L141.6 84.5L140.2 82.7L138.6 80.8L136.7 78.8L134.3 76.5L136.7 74.2L138.6 72.2L140.2 70.3L141.6 68.5L142.7 66.8L143.6 65.0L144.2 63.1L144.7 61.1L144.9 58.9L145.1 56.4L145.3 53.7L145.1 50.3L148.5 50.5L151.2 50.3L153.7 50.1L155.9 49.9L157.9 49.4L159.8 48.8L161.6 47.9L163.3 46.8L165.1 45.4L167.0 43.8L169.0 41.9L171.3 39.5L173.6 41.9L175.6 43.8L177.5 45.4L179.3 46.8L181.0 47.9L182.8 48.8L184.7 49.4L186.7 49.9L188.9 50.1L191.4 50.3L194.1 50.5L197.5 50.3L197.3 53.7L197.5 56.4L197.7 58.9L197.9 61.1L198.4 63.1L199.0 65.0L199.9 66.8L201.0 68.5L202.4 70.3L204.0 72.2L205.9 74.2L208.3 76.5Z" fill="none" stroke="url(#gold)" stroke-width="2"/>
<text x="170.8" y="84.7" font-size="20.5" font-weight="900" text-anchor="middle" fill="url(#gold2)" stroke="url(#gold2)" stroke-width=".9" font-family="'Liberation Sans','Noto Sans CJK SC',sans-serif" textLength="40" lengthAdjust="spacingAndGlyphs">认证</text>
<rect x="150.3" y="96.5" width="42" height="1.5" fill="url(#gold)"/>
<path d="M166.3 100.5h10M171.3 99.0v4" stroke="#cbb07a" stroke-width=".7"/>
<g fill="#d9b870" font-family="'DejaVu Sans',sans-serif"><text x="164.8" y="54.8" font-size="5" text-anchor="middle">★</text><text x="171.3" y="54.3" font-size="5" text-anchor="middle">★</text><text x="177.8" y="54.8" font-size="5" text-anchor="middle">★</text><text x="148.3" y="63.3" font-size="5" text-anchor="middle">★</text><text x="145.3" y="70.3" font-size="5" text-anchor="middle">★</text><text x="144.3" y="78.3" font-size="5" text-anchor="middle">★</text><text x="145.3" y="86.3" font-size="5" text-anchor="middle">★</text><text x="148.3" y="93.3" font-size="5" text-anchor="middle">★</text><text x="194.3" y="63.3" font-size="5" text-anchor="middle">★</text><text x="197.3" y="70.3" font-size="5" text-anchor="middle">★</text><text x="198.3" y="78.3" font-size="5" text-anchor="middle">★</text><text x="197.3" y="86.3" font-size="5" text-anchor="middle">★</text><text x="194.3" y="93.3" font-size="5" text-anchor="middle">★</text></g>
</svg><!--/BANNER--></div>
<div id="news" class="abs"><svg class="abs" style="left:12px;top:11px" width="18" height="18" viewBox="0 0 18 18"><path d="M1 6h4l5.500-4.500v15L5 12H1z" fill="#4a4f66"/><path d="M5 6l5.500-4.500v15L5 12z" fill="#6d7389"/><path d="M12.500 5.500a5 5 0 0 1 0 7M14.600 3.500a8 8 0 0 1 0 11" fill="none" stroke="#3a3f58" stroke-width="1.200"/></svg><b>快訊:</b></div>
<div id="team" class="abs"><svg class="abs" style="left:22px;top:22px" width="72" height="72" viewBox="160 777 72 72"><defs><clipPath id="gsw"><circle cx="196.500" cy="813" r="29"/></clipPath></defs><circle cx="196.500" cy="814" r="33.500" fill="#d9dbe2"/><circle cx="196.500" cy="813" r="33.300" fill="#f4f4f6"/><circle cx="196.500" cy="813" r="31.800" fill="#1d428a"/><circle cx="196.500" cy="813" r="29.200" fill="none" stroke="#fdb927" stroke-width="1.300"/><g clip-path="url(#gsw)" stroke="#fdb927" fill="none"><path d="M180.800 799v41M185.300 799v41" stroke-width="2.200"/><path d="M180 798.500h6.200" stroke-width="1.600"/><path d="M163 831h70" stroke-width="2.400"/><path d="M184 835h50" stroke-width="1"/><path d="M186 801c10 14 26 24 46 27" stroke-width="1.300"/><path d="M180 801c-4 10-9 19-16 27" stroke-width="1.300"/><path d="M190 806v24M194 811v19M198 815v15M202 818v12M206 821v9M210 823v7M214 825v5M218 826.500v4M177 807v23M173.500 814v16M170 820v10" stroke-width="1"/><path d="M186 802l6 28M186 806l14 24M186 812l22 18" stroke-width=".8"/></g></svg></div>

<div id="modal" class="abs">
  <div id="tbar" class="abs"><svg class="abs" style="left:1070px;top:0" width="115" height="27" viewBox="1290 0 115 27" fill="none" stroke="#fff" stroke-width="1.1"><path d="M1300 10.200l5.500 5.600 5.500-5.600"/><path d="M1331 12.500h12"/><rect x="1363.500" y="8.500" width="10" height="9"/><path d="M1393.300 7.300l10.600 10.600M1403.900 7.300l-10.600 10.600"/></svg></div>
  <div id="stripe" class="abs"></div>
  <div id="side" class="abs">
    <div id="sidehead" class="abs"><div class="abs" style="left:-20px;top:-30px;width:120px;height:60px;background:linear-gradient(160deg,rgba(80,225,250,.8),rgba(80,225,250,0) 58%)"></div><svg class="abs" style="left:130px;top:0" width="80" height="39" viewBox="358 28 80 39"><g fill="#fff" fill-opacity=".13"><path d="M388 33c6-5 16-5 24-2 8 3 13 10 14 18 .5 4-3 5-6 3l-6-5c-3-1-7-1-10 0-3 3-8 5-12 3-5-3-7-11-4-17z"/><circle cx="372.500" cy="58" r="8"/></g><g fill="#1f86e8" fill-opacity=".5"><circle cx="393" cy="36" r="5"/><circle cx="411" cy="41" r="1.600"/><circle cx="416" cy="39" r="1.600"/><circle cx="413" cy="46" r="1.600"/><circle cx="418" cy="44" r="1.600"/><circle cx="372.500" cy="58" r="3.500"/></g></svg><div class="t1">玩家中心</div><div class="t2">PLAYERS&nbsp; CENTER</div></div>
    <div class="sec" style="top:46px">財務中心<b></b></div>
    <div class="it " style="top:91px"><svg class="ic big" viewBox="0 0 16 14"><rect x="1" y="1" width="14" height="12" rx="1.800" fill="none" stroke="currentColor" stroke-width="1.900"/><rect x="1" y="3.400" width="14" height="2.700" fill="currentColor"/><path d="M3.600 9v1.800M5.300 9v1.800M7 9v1.800" stroke="currentColor" stroke-width="1"/></svg><span style="left:61.5px">存款專區</span></div>
    <div class="it " style="top:131px"><svg class="ic big" viewBox="0 0 17 13"><path d="M6.500 .3h9.500v2.100H6.500zM5.500 3.200h10v2.100h-10zM7 6.100h7.500v1.700H7z" fill="currentColor"/><path d="M.3 11.800c1.700-2.800 4-3.600 6.200-2.800l3.200.7c1 .3.900 1.500-.1 1.500H6.800" fill="none" stroke="currentColor" stroke-width="1.500" stroke-linecap="round"/><path d="M10 10.300l5-2.400c1.100-.4 1.700.7.800 1.400L9.800 12.600H4.500L1.800 13" fill="none" stroke="currentColor" stroke-width="1.500" stroke-linecap="round" stroke-linejoin="round"/></svg><span style="left:61.5px">取款專區</span></div>
    <div class="it " style="top:171px"><svg class="ic" viewBox="0 0 14 14"><path d="M4.2 1h5.6L8.6 3.6c2.6 1.4 4.4 4.2 4.4 6.6 0 1.8-1 2.8-2.6 2.8H3.6C2 13 1 12 1 10.200c0-2.400 1.800-5.200 4.400-6.600z" fill="currentColor"/><path d="M5.300 6.300 7 8.600l1.700-2.300M7 8.600V11.500M5.400 9.200h3.200M5.400 10.500h3.200" stroke="#fff" stroke-width=".9" fill="none"/></svg><span style="left:58px">充值記錄</span></div>
    <div class="it " style="top:210px"><svg class="ic" viewBox="0 0 14 14"><path d="M1 6.500 7.500 2l2.300 3.200" fill="none" stroke="currentColor" stroke-width="1.5" stroke-linejoin="round"/><path d="M3.200 5.500h9.300v7.500H3.200z" fill="none" stroke="currentColor" stroke-width="1.600"/><path d="M1.200 7.200l2 .3v5l-2-1.500z" fill="currentColor"/><rect x="4.600" y="10" width="3" height="1.600" fill="currentColor"/></svg><span style="left:58px">提現記錄</span></div>
    <div class="it " style="top:250px"><svg class="ic" viewBox="0 0 14 14"><path d="M1 7.500 8 1.500l4.800 5.200V13H3.500V8.300z" fill="none" stroke="currentColor" stroke-width="1.500" stroke-linejoin="round"/><circle cx="7.800" cy="8.800" r="2.400" fill="none" stroke="currentColor" stroke-width="1.200"/><path d="M5.500 4.800h5M6.800 8.800h2" stroke="currentColor" stroke-width="1"/><path d="M1 7.500l2.500.8V13L1 11.500z" fill="currentColor"/></svg><span style="left:58px">資金記錄</span></div>
    <div class="act abs"></div>
    <div class="it on" style="top:290px"><svg class="ic" viewBox="0 0 14 12"><path d="M2.800 0h9.400A1.800 1.800 0 0 1 14 1.800v8.400a1.800 1.800 0 0 1-1.800 1.800H2.800A1.800 1.800 0 0 1 1 10.200V1.800A1.800 1.800 0 0 1 2.800 0zM4.200 2.600v1.500h7.200V2.600zM4.200 5.300v1.500h7.200V5.300zM4.200 8v1.500h7.200V8z" fill="currentColor" fill-rule="evenodd"/><rect x="0" y="2" width="2.200" height="8" rx="1" fill="currentColor"/></svg><span style="left:58px">HH彩票下注<em></em></span></div>
    <div class="it " style="top:330px"><svg class="ic ln" viewBox="0 0 14 12"><rect x=".8" y="1" width="3.400" height="3.400" rx=".6" fill="none" stroke="currentColor" stroke-width="1.100"/><rect x=".8" y="7.400" width="3.400" height="3.400" rx=".6" fill="none" stroke="currentColor" stroke-width="1.100"/><path d="M6.500 1.500h7M6.500 4h7M6.500 7.900h7M6.500 10.400h7" stroke="currentColor" stroke-width="1.100"/></svg><span style="left:58px">廳室投註記錄</span></div>
    <div class="it " style="top:369px"><svg class="ic ln" viewBox="0 0 14 14"><rect x="1.700" y="1.700" width="10.600" height="10.600" rx=".8" fill="none" stroke="currentColor" stroke-width="1.200"/><path d="M3.600 9.600l2.400-3 1.800 1.400 2.600-3.400" fill="none" stroke="currentColor" stroke-width="1.100"/></svg><span style="left:58px">玩家投注報表</span></div>
    <div class="sec" style="top:413px">個人中心<b></b></div>
    <div class="it " style="top:458px"><svg class="ic big2" viewBox="0 0 16 16"><path d="M8 1c.700 0 1.200.500 1.200 1.100 2.300.600 3.500 2.500 3.500 4.900 0 2.600.8 3.800 2.300 4.800v.9H1v-.9C2.500 10.800 3.300 9.600 3.300 7c0-2.400 1.200-4.300 3.500-4.900C6.800 1.500 7.300 1 8 1zM6.200 13.600h3.600c0 1-.8 1.800-1.800 1.800s-1.800-.8-1.800-1.800z" fill="currentColor"/></svg><span style="left:61.5px">消息公告</span></div>
    <div class="it " style="top:498px"><svg class="ic big2" viewBox="0 0 16 16"><path d="M8 1c2.100 0 3.500 1.600 3.500 3.700 0 1.600-.7 3-1.700 3.800v.9c0 .5.300.8.800 1l2.600 1c1.100.400 1.800 1.200 1.800 2.400V15H1v-1.200c0-1.200.7-2 1.800-2.400l2.600-1c.5-.2.800-.5.800-1v-.9c-1-.8-1.700-2.200-1.700-3.800C4.500 2.600 5.900 1 8 1z" fill="currentColor"/></svg><span style="left:61.5px">個人資料</span></div>
    <div class="it " style="top:537px"><svg class="ic" viewBox="0 0 14 14"><g fill="currentColor"><circle cx="7" cy="7" r="4.300"/><g id="gt"><rect x="5.900" y="0" width="2.200" height="14" rx=".6"/></g><rect x="5.900" y="0" width="2.200" height="14" rx=".6" transform="rotate(45 7 7)"/><rect x="5.900" y="0" width="2.200" height="14" rx=".6" transform="rotate(90 7 7)"/><rect x="5.900" y="0" width="2.200" height="14" rx=".6" transform="rotate(135 7 7)"/></g><circle cx="7" cy="7" r="2" fill="#fff"/></svg><span style="left:58px">修改密碼</span></div>
    <div class="sec" style="top:581px">代理中心<b></b></div>
    <div class="it " style="top:626px"><svg class="ic" viewBox="0 0 14 14"><path d="M2.700 1h5.800l3 3v9H2.700z" fill="none" stroke="currentColor" stroke-width="1.500" stroke-linejoin="round"/><path d="M8.300 1v3.200h3.200" fill="none" stroke="currentColor" stroke-width="1.200"/></svg><span style="left:53.5px">代理規則說明</span></div>
    <div class="it " style="top:666px"><svg class="ic" viewBox="0 0 14 14"><circle cx="3.600" cy="7" r="2.100" fill="currentColor"/><circle cx="10.400" cy="2.800" r="2.100" fill="currentColor"/><circle cx="10.400" cy="11.200" r="2.100" fill="currentColor"/><path d="M10.400 2.800 3.600 7l6.800 4.200" fill="none" stroke="currentColor" stroke-width="1.500"/></svg><span style="left:53.5px">代理推廣管理</span></div>
    <div class="it " style="top:706px"><svg class="ic ln" viewBox="0 0 14 13"><path d="M3.200 .7h10.100v11.600H2.300c-.9 0-1.600-.7-1.600-1.600V3.200h2.500" fill="none" stroke="currentColor" stroke-width="1.300"/><path d="M3.200 .7v10M5.500 3.200h5.600M5.500 5.800h5.600M5.500 8.400h5.600" stroke="currentColor" stroke-width="1.300" fill="none"/></svg><span style="left:53.5px">代理團隊統計</span></div>
    <div class="it " style="top:746px"><svg class="ic ln" viewBox="0 0 14 13"><path d="M3.200 .7h10.100v11.600H2.300c-.9 0-1.600-.7-1.600-1.600V3.200h2.500" fill="none" stroke="currentColor" stroke-width="1.300"/><path d="M3.200 .7v10M5.500 3.200h5.600M5.500 5.800h5.600M5.500 8.400h5.600" stroke="currentColor" stroke-width="1.300" fill="none"/></svg><span style="left:53.5px">代理報表明細</span></div>
    <div class="it " style="top:785px"><svg class="ic" viewBox="0 0 14 12"><path d="M5 1.500c1.300 0 2.200 1 2.200 2.300 0 .9-.4 1.700-1 2.200v.5l2.300.9c.7.300 1.100.8 1.100 1.500V10H.4V8.900c0-.7.400-1.200 1.100-1.500l2.300-.9V6c-.6-.5-1-1.300-1-2.200C2.800 2.500 3.700 1.500 5 1.500z" fill="currentColor"/><path d="M9.600 2c1.100 0 1.900.9 1.900 2 0 .8-.3 1.500-.9 1.900v.4l2 .8c.6.300 1 .7 1 1.400V10h-3.200V8.900c0-1-.6-1.700-1.500-2.100l-.9-.4c.4-.6.600-1.400.6-2.200 0-.7-.2-1.300-.5-1.800.4-.3.900-.4 1.500-.4z" fill="currentColor"/></svg><span style="left:53.5px">代理下級會員</span></div>
    <div class="it " style="top:825px"><svg class="ic ln" viewBox="0 0 14 14"><rect x="1.700" y="2.200" width="10.600" height="11" rx="1" fill="none" stroke="currentColor" stroke-width="1.300"/><rect x="4.800" y=".6" width="4.400" height="2.600" fill="currentColor"/><path d="M4.200 6h5.600M4.200 8.400h5.600M4.200 10.800h5.600" stroke="currentColor" stroke-width="1.100"/></svg><span style="left:53.5px">會員投註明細</span></div>
    <div class="it " style="top:865px"><svg class="ic ln" viewBox="0 0 14 14"><rect x="1.700" y="1.700" width="10.600" height="10.600" rx="1" fill="none" stroke="currentColor" stroke-width="1.300"/><path d="M4.200 5h5.600M4.200 7.300h5.600M4.200 9.600h5.600" stroke="currentColor" stroke-width="1.100"/></svg><span style="left:53.5px">會員交易明細</span></div>
  </div>
  <div id="main" class="abs">
    <div id="mhead" class="abs"><span class="ham"><i></i><i></i><i></i></span><span class="ttl">HH彩票下注</span></div>
    <div id="filter" class="abs">
      <label class="abs" style="left:10px">彩種名稱:</label>
      <div class="sel abs" style="left:75px;width:121px">全部<svg viewBox="0 0 10 6"><path d="M1 1l4 4 4-4"/></svg></div>
      <label class="abs" style="left:200px">開獎狀態:</label>
      <div class="sel abs" style="left:264px;width:67px">全部<svg viewBox="0 0 10 6"><path d="M1 1l4 4 4-4"/></svg></div>
      <label class="abs" style="left:335px">注單狀態:</label>
      <div class="sel abs" style="left:399px;width:52px">全部<svg viewBox="0 0 10 6"><path d="M1 1l4 4 4-4"/></svg></div>
      <label class="abs" style="left:455px">開始日期:</label>
      <div class="inp abs" style="left:518px;width:150px">2024-08-13 12:00:00</div>
      <label class="abs" style="left:672px">結束日期:</label>
      <div class="inp abs" style="left:735px;width:150px">2024-08-15 12:00:00</div>
      <div class="btn abs">查詢</div>
    </div>
<table id="tb" class="abs"><colgroup><col style="width:129px"><col style="width:104px"><col style="width:74px"><col style="width:96px"><col style="width:142px"><col style="width:55px"><col style="width:54px"><col style="width:92px"><col style="width:83px"><col style="width:60px"><col style="width:62px"></colgroup>
<thead><tr><th>訂單號</th><th>期數</th><th>彩種名稱</th><th>玩法</th><th>下注信息</th><th>投注額</th><th>輸贏</th><th>開獎結果</th><th>下注時間</th><th>開獎狀態</th><th>注單狀態</th></tr></thead><tbody>
<tr><td>215217236035115<br>0230</td><td>31173139</td><td class="c">澳洲幸运<s>8</s></td><td class="c">第一球<s>(</s>大<s>)</s></td><td class="c">大<s>-A</s>盤<s>@1.985</s></td><td>7.00</td><td>-7.00</td><td>3,20,15,13,14,<br>6,2,4</td><td>2024-08-14<br>10:45:11</td><td class="c">已開獎</td><td class="c">有效</td></tr>
<tr><td>215217236031839<br>5820</td><td>31173138</td><td class="c">澳洲幸运<s>8</s></td><td class="c">第一球<s>(</s>小<s>)</s></td><td class="c">小<s>-A</s>盤<s>@1.985</s></td><td>14.00</td><td>13.79</td><td>7,5,15,8,20,9,<br>19,14</td><td>2024-08-14<br>10:39:43</td><td class="c">已開獎</td><td class="c">有效</td></tr>
<tr><td>215217236028764<br>8110</td><td>31173137</td><td class="c">澳洲幸运<s>8</s></td><td class="c">第一球<s>(</s>小<s>)</s></td><td class="c">小<s>-A</s>盤<s>@1.985</s></td><td>14.00</td><td>13.79</td><td>8,3,19,7,1,5,9,<br>18</td><td>2024-08-14<br>10:34:36</td><td class="c">已開獎</td><td class="c">有效</td></tr>
<tr><td>215217236026162<br>0470</td><td>31173136</td><td class="c">澳洲幸运<s>8</s></td><td class="c">第一球<s>(</s>大<s>)</s></td><td class="c">大<s>-A</s>盤<s>@1.985</s></td><td>14.00</td><td>-14.00</td><td>8,13,9,10,19,1<br>6,7,2</td><td>2024-08-14<br>10:30:16</td><td class="c">已開獎</td><td class="c">有效</td></tr>
<tr><td>215217236022744<br>5410</td><td>31173135</td><td class="c">澳洲幸运<s>8</s></td><td class="c">第一球<s>(</s>大<s>)</s></td><td class="c">大<s>-A</s>盤<s>@1.985</s></td><td>14.00</td><td>-14.00</td><td>2,19,18,9,20,1<br>3,4,17</td><td>2024-08-14<br>10:24:34</td><td class="c">已開獎</td><td class="c">有效</td></tr>
<tr><td>215217236020137<br>8410</td><td>31173134</td><td class="c">澳洲幸运<s>8</s></td><td class="c">第一球<s>(</s>大<s>)</s></td><td class="c">大<s>-A</s>盤<s>@1.985</s></td><td>14.00</td><td>13.79</td><td>11,13,9,20,5,<br>8,15,4</td><td>2024-08-14<br>10:20:13</td><td class="c">已開獎</td><td class="c">有效</td></tr>
<tr><td>215217236017684<br>3540</td><td>31173133</td><td class="c">澳洲幸运<s>8</s></td><td class="c">第一球<s>(</s>小<s>)</s></td><td class="c">小<s>-A</s>盤<s>@1.985</s></td><td>7.00</td><td>6.90</td><td>7,20,18,11,17,<br>19,6,1</td><td>2024-08-14<br>10:16:08</td><td class="c">已開獎</td><td class="c">有效</td></tr>
<tr><td>215217236014392<br>8790</td><td>31173132</td><td class="c">澳洲幸运<s>8</s></td><td class="c">第一球<s>(</s>小<s>)</s></td><td class="c">小<s>-A</s>盤<s>@1.985</s></td><td>14.00</td><td>-14.00</td><td>11,12,16,15,1<br>8,3,4,8</td><td>2024-08-14<br>10:10:39</td><td class="c">已開獎</td><td class="c">有效</td></tr>
<tr><td>215217236012008<br>7800</td><td>31173131</td><td class="c">澳洲幸运<s>8</s></td><td class="c">第一球<s>(</s>小<s>)</s></td><td class="c">小<s>-A</s>盤<s>@1.985</s></td><td>5.00</td><td>-5.00</td><td>19,12,15,13,6,<br>1,9,7</td><td>2024-08-14<br>10:06:40</td><td class="c">已開獎</td><td class="c">有效</td></tr>
<tr><td>215217236011019<br>2130</td><td>31173131</td><td class="c">澳洲幸运<s>8</s></td><td class="c">第一球<s>(</s>小<s>)</s></td><td class="c">小<s>-A</s>盤<s>@1.985</s></td><td>14.00</td><td>-14.00</td><td>19,12,15,13,6,<br>1,9,7</td><td>2024-08-14<br>10:05:01</td><td class="c">已開獎</td><td class="c">有效</td></tr>
<tr><td>215217236008570<br>4550</td><td>31173130</td><td class="c">澳洲幸运<s>8</s></td><td class="c">第一球<s>(</s>小<s>)</s></td><td class="c">小<s>-A</s>盤<s>@1.985</s></td><td>7.00</td><td>6.90</td><td>6,19,20,8,7,1,<br>16,9</td><td>2024-08-14<br>10:00:57</td><td class="c">已開獎</td><td class="c">有效</td></tr>
<tr><td>215217236005457<br>3810</td><td>31173129</td><td class="c">澳洲幸运<s>8</s></td><td class="c">第一球<s>(</s>大<s>)</s></td><td class="c">大<s>-A</s>盤<s>@1.985</s></td><td>14.00</td><td>13.79</td><td>16,14,8,6,9,1<br>3,2,20</td><td>2024-08-14<br>09:55:45</td><td class="c">已開獎</td><td class="c">有效</td></tr>
<tr class="ft"><td colspan="5" class="c">當前頁統計</td><td>138.00</td><td>0.96</td><td></td><td></td><td></td><td></td></tr>
</tbody></table>
  </div>
</div>
<div id="bottomline" class="abs"></div>
</body>
</html>
